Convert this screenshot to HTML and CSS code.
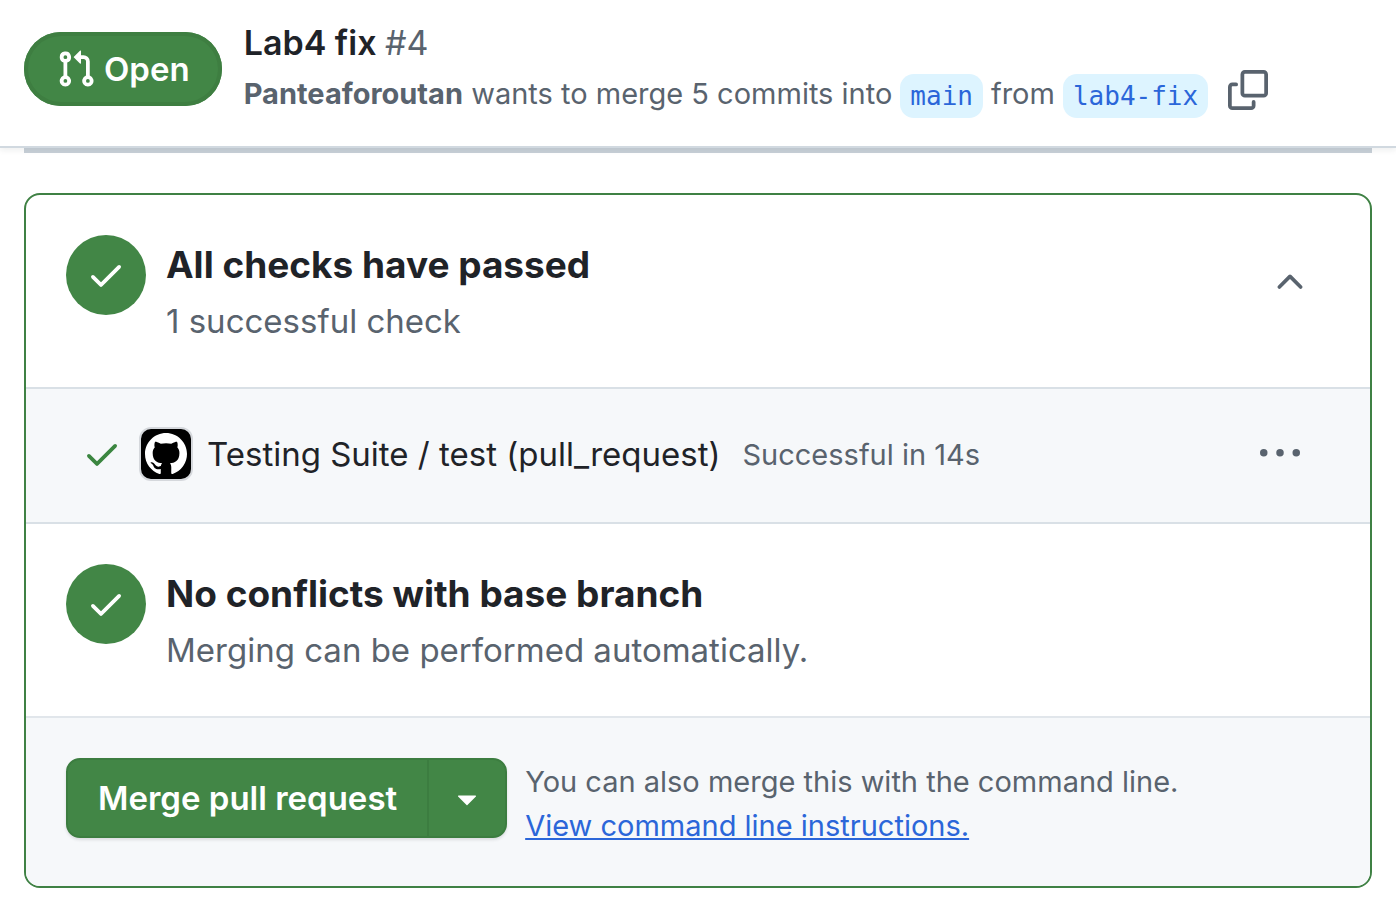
FILE: index.html
```html
<!DOCTYPE html>
<html lang="en">
<head>
<meta charset="utf-8">
<title>Lab4 fix #4</title>
<link rel="stylesheet" href="styles.css">
</head>
<body>
<header class="pr-header">
  <span class="state">
    <svg class="icon" viewBox="0 0 16 16" aria-hidden="true"><path d="M1.5 3.25a2.25 2.25 0 1 1 3 2.122v5.256a2.251 2.251 0 1 1-1.5 0V5.372A2.25 2.25 0 0 1 1.5 3.25Zm5.677-.177L9.573.677A.25.25 0 0 1 10 .854V2.5h1A2.5 2.5 0 0 1 13.5 5v5.628a2.251 2.251 0 1 1-1.5 0V5a1 1 0 0 0-1-1h-1v1.646a.25.25 0 0 1-.427.177L7.177 3.427a.25.25 0 0 1 0-.354ZM3.75 2.5a.75.75 0 1 0 0 1.5.75.75 0 0 0 0-1.5Zm0 9.5a.75.75 0 1 0 0 1.5.75.75 0 0 0 0-1.5Zm8.25.75a.75.75 0 1 0 1.5 0 .75.75 0 0 0-1.5 0Z"/></svg>
    <span>Open</span>
  </span>
  <div class="summary">
    <h1 class="pr-title">Lab4 fix <span class="pr-number">#4</span></h1>
    <div class="merge-line">
      <span class="merge-text"><strong>Panteaforoutan</strong> wants to merge 5 commits into</span>
      <a class="branch" href="#main">main</a>
      <span class="merge-text">from</span>
      <a class="branch" href="#lab4-fix">lab4-fix</a>
      <button class="icon-button copy" type="button" aria-label="Copy branch name">
        <svg class="icon" viewBox="0 0 16 16" aria-hidden="true"><path d="M0 6.75C0 5.784.784 5 1.75 5h1.5a.75.75 0 0 1 0 1.5h-1.5a.25.25 0 0 0-.25.25v7.5c0 .138.112.25.25.25h7.5a.25.25 0 0 0 .25-.25v-1.5a.75.75 0 0 1 1.5 0v1.5A1.75 1.75 0 0 1 9.25 16h-7.5A1.75 1.75 0 0 1 0 14.25Z"/><path d="M5 1.75C5 .784 5.784 0 6.75 0h7.5C15.216 0 16 .784 16 1.75v7.5A1.75 1.75 0 0 1 14.25 11h-7.5A1.75 1.75 0 0 1 5 9.25Zm1.75-.25a.25.25 0 0 0-.25.25v7.5c0 .138.112.25.25.25h7.5a.25.25 0 0 0 .25-.25v-7.5a.25.25 0 0 0-.25-.25Z"/></svg>
      </button>
    </div>
  </div>
</header>
<main class="content">
  <div class="timeline-end"></div>
  <section class="merge-box">
    <div class="status">
      <span class="badge"><svg class="icon" viewBox="0 0 16 16" aria-hidden="true"><path d="M13.78 4.22a.75.75 0 0 1 0 1.06l-7.25 7.25a.75.75 0 0 1-1.06 0L2.22 9.28a.751.751 0 0 1 .018-1.042.751.751 0 0 1 1.042-.018L6 10.94l6.72-6.72a.75.75 0 0 1 1.06 0Z"/></svg></span>
      <div class="status-text">
        <h2 class="status-title">All checks have passed</h2>
        <p class="status-note">1 successful check</p>
      </div>
      <button class="icon-button toggle" type="button" aria-label="Collapse checks">
        <svg class="icon" viewBox="0 0 16 16" aria-hidden="true"><path d="M3.22 10.53a.749.749 0 0 1 0-1.06l4.25-4.25a.749.749 0 0 1 1.06 0l4.25 4.25a.749.749 0 1 1-1.06 1.06L8 6.811 4.28 10.53a.749.749 0 0 1-1.06 0Z"/></svg>
      </button>
    </div>
    <div class="check">
      <svg class="icon check-mark" viewBox="0 0 16 16" aria-hidden="true"><path d="M13.78 4.22a.75.75 0 0 1 0 1.06l-7.25 7.25a.75.75 0 0 1-1.06 0L2.22 9.28a.751.751 0 0 1 .018-1.042.751.751 0 0 1 1.042-.018L6 10.94l6.72-6.72a.75.75 0 0 1 1.06 0Z"/></svg>
      <span class="avatar"><svg class="avatar-logo" viewBox="0 0 16 16" aria-hidden="true"><path d="M8 0C3.58 0 0 3.58 0 8c0 3.54 2.29 6.53 5.47 7.59.4.07.55-.17.55-.38 0-.19-.01-.82-.01-1.49-2.01.37-2.53-.49-2.69-.94-.09-.23-.48-.94-.82-1.13-.28-.15-.68-.52-.01-.53.63-.01 1.08.58 1.23.82.72 1.21 1.87.87 2.33.66.07-.52.28-.87.51-1.07-1.78-.2-3.64-.89-3.64-3.95 0-.87.31-1.59.82-2.15-.08-.2-.36-1.02.08-2.12 0 0 .67-.21 2.2.82.64-.18 1.32-.27 2-.27.68 0 1.36.09 2 .27 1.53-1.04 2.2-.82 2.2-.82.44 1.1.16 1.92.08 2.12.51.56.82 1.27.82 2.15 0 3.07-1.87 3.75-3.65 3.95.29.25.54.73.54 1.48 0 1.07-.01 1.93-.01 2.2 0 .21.15.46.55.38A8.013 8.013 0 0016 8c0-4.42-3.58-8-8-8z"/></svg></span>
      <span class="check-name">Testing Suite / test (pull_request)</span>
      <span class="check-note">Successful in 14s</span>
      <button class="icon-button more" type="button" aria-label="More actions">
        <svg class="icon" viewBox="0 0 16 16" aria-hidden="true"><path d="M8 9a1.5 1.5 0 1 0 0-3 1.5 1.5 0 0 0 0 3ZM1.5 9a1.5 1.5 0 1 0 0-3 1.5 1.5 0 0 0 0 3Zm13 0a1.5 1.5 0 1 0 0-3 1.5 1.5 0 0 0 0 3Z"/></svg>
      </button>
    </div>
    <div class="status">
      <span class="badge"><svg class="icon" viewBox="0 0 16 16" aria-hidden="true"><path d="M13.78 4.22a.75.75 0 0 1 0 1.06l-7.25 7.25a.75.75 0 0 1-1.06 0L2.22 9.28a.751.751 0 0 1 .018-1.042.751.751 0 0 1 1.042-.018L6 10.94l6.72-6.72a.75.75 0 0 1 1.06 0Z"/></svg></span>
      <div class="status-text">
        <h2 class="status-title">No conflicts with base branch</h2>
        <p class="status-note">Merging can be performed automatically.</p>
      </div>
    </div>
    <div class="actions">
      <div class="button-group">
        <button class="merge" type="button">Merge pull request</button>
        <button class="merge-options" type="button" aria-label="Select merge method">
          <svg class="icon" viewBox="0 0 16 16" aria-hidden="true"><path d="m4.427 7.427 3.396 3.396a.25.25 0 0 0 .354 0l3.396-3.396A.25.25 0 0 0 11.396 7H4.604a.25.25 0 0 0-.177.427Z"/></svg>
        </button>
      </div>
      <p class="hint">You can also merge this with the command line. <br><a class="hint-link" href="#instructions">View command line instructions.</a></p>
    </div>
  </section>
</main>
</body>
</html>
```
FILE: styles.css
```css
* { box-sizing: border-box; }

body {
  margin: 0;
  background: #fff;
  color: #1f2328;
  font-family: Inter, "Liberation Sans", sans-serif;
  font-size: 33px;
}

h1, h2, p { margin: 0; }

button {
  padding: 0;
  border: 0;
  background: none;
  color: inherit;
  font: inherit;
  cursor: pointer;
}

.icon {
  display: block;
  flex: none;
  width: 40px;
  height: 40px;
  fill: currentColor;
}

.icon-button { flex: none; color: #59636e; }

.pr-header {
  position: relative;
  display: flex;
  align-items: center;
  gap: 22px;
  padding: 16px 24px 24px;
  border-bottom: 2px solid #d1d9e0;
  background: #fff;
  box-shadow: 0 2px 6px rgba(31, 35, 40, 0.08);
}

.state {
  display: flex;
  flex: none;
  align-items: center;
  gap: 8px;
  height: 74px;
  padding: 0 32px;
  border-radius: 37px;
  background: #428646;
  box-shadow: inset 0 0 0 4px #3e7e41;
  color: #fff;
  font-weight: 600;
}

.summary { min-width: 0; }

.pr-title {
  font-size: 34px;
  font-weight: 600;
  line-height: 54px;
}

.pr-number { color: #59636e; font-weight: 400; }

.merge-line {
  display: flex;
  align-items: center;
  gap: 8px;
  color: #59636e;
  font-size: 29px;
  line-height: 44px;
  white-space: nowrap;
}

.merge-text { padding-bottom: 4px; }

.merge-text strong { font-weight: 700; }

.branch {
  padding: 0 10px;
  border-radius: 14px;
  background: #ddf4ff;
  color: #2b66d9;
  font-family: "DejaVu Sans Mono", monospace;
  font-size: 26px;
  text-decoration: none;
}

.copy { margin: 0 0 12px 12px; }

.content { padding: 0 24px 18px; }

.timeline-end {
  height: 5px;
  margin-bottom: 40px;
  background: #c8d0d8;
}

.merge-box {
  overflow: hidden;
  border: 2px solid #3f8144;
  border-radius: 16px;
}

.status {
  display: flex;
  gap: 20px;
  padding: 40px;
}

.badge {
  display: grid;
  flex: none;
  place-items: center;
  width: 80px;
  height: 80px;
  border-radius: 50%;
  background: #428646;
  color: #fff;
}

.status-text { flex: 1; min-width: 0; }

.status-title {
  font-size: 37px;
  font-weight: 700;
  line-height: 60px;
}

.status-note {
  color: #59636e;
  line-height: 52px;
}

.toggle { align-self: flex-start; margin: 27px 20px 0 0; }

.check {
  display: flex;
  align-items: center;
  padding: 38px 70px 41px 56px;
  border: solid #d9e0e6;
  border-width: 2px 0;
  background: #f6f8fa;
}

.check-mark { color: #3b8640; }

.avatar {
  display: grid;
  flex: none;
  place-items: center;
  width: 54px;
  height: 54px;
  margin: 0 14px 0 17px;
  border: 2px solid #d5d8dc;
  border-radius: 12px;
  background: #000;
}

.avatar-logo { width: 42px; height: 42px; fill: #fff; }

.check-note {
  margin-left: 22px;
  color: #59636e;
  font-size: 29px;
}

.more { margin-left: auto; }

.actions {
  display: flex;
  align-items: flex-start;
  gap: 18px;
  padding: 40px 40px 38px;
  border-top: 2px solid #e1e6eb;
  background: #f6f8fa;
}

.button-group {
  display: flex;
  flex: none;
  height: 80px;
  overflow: hidden;
  border: 2px solid #3c7d40;
  border-radius: 14px;
  background: #428646;
  box-shadow: 0 2px 3px rgba(31, 35, 40, 0.12);
  color: #fff;
}

.merge { padding: 0 30px; font-weight: 600; }

.merge-options {
  padding: 0 18px;
  border-left: 2px solid #3c7d40;
}

.hint {
  padding-top: 2px;
  color: #59636e;
  font-size: 29px;
  line-height: 44px;
}

.hint-link { color: #2b66d9; }
```
